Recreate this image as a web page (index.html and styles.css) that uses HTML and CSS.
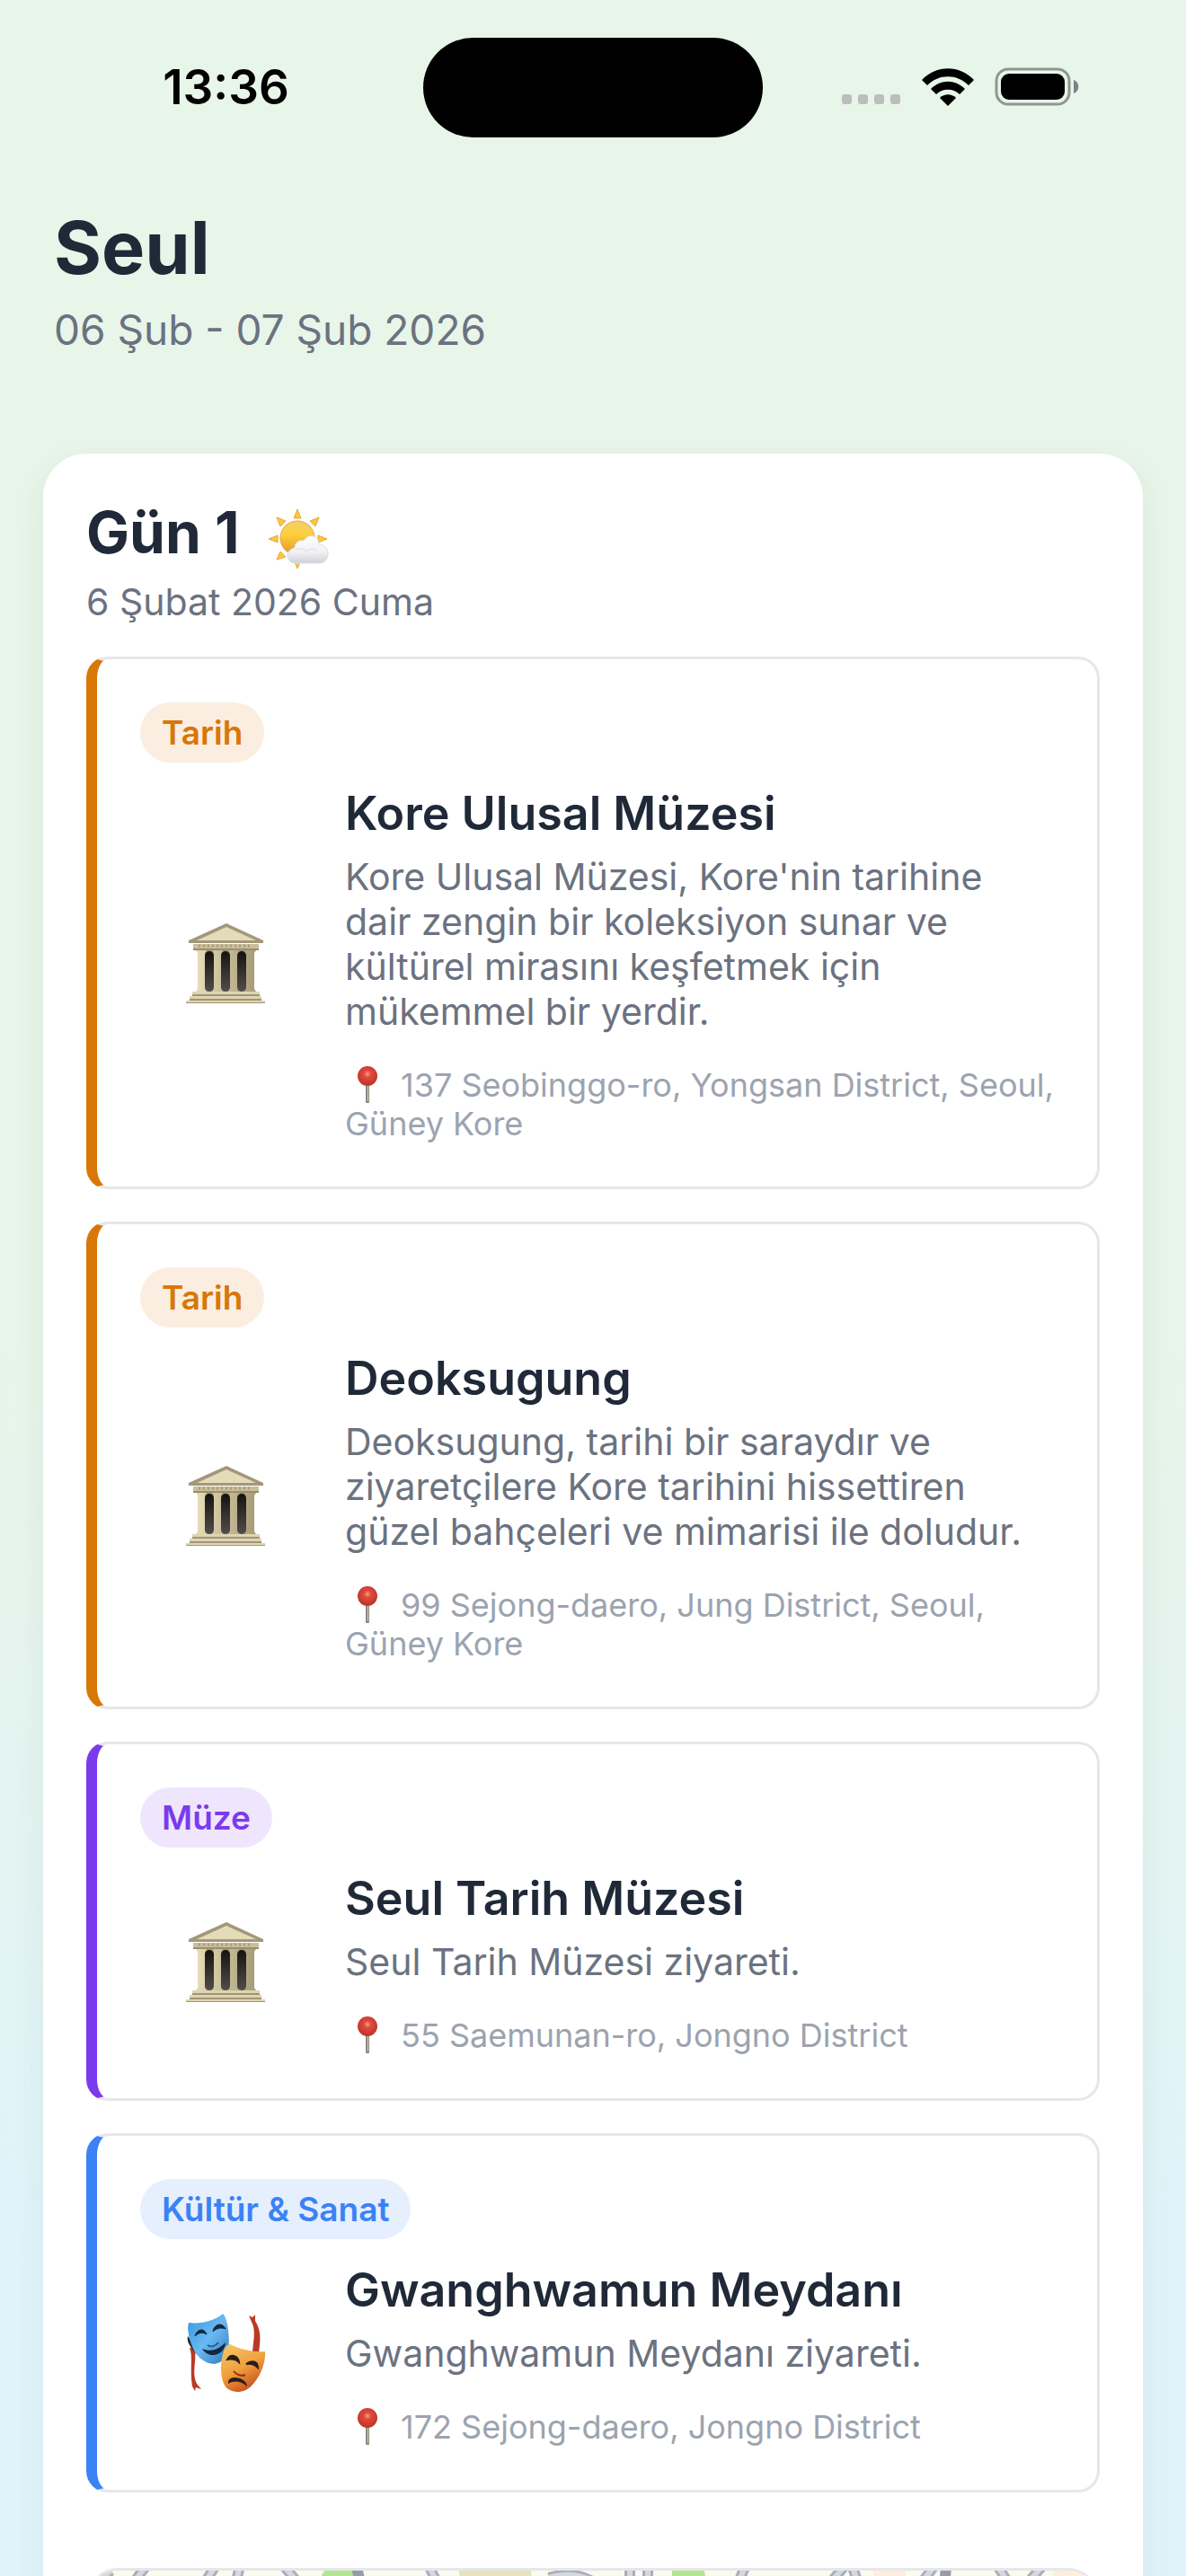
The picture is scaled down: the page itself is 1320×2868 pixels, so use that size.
FILE: index.html
```html
<!DOCTYPE html>
<html lang="tr">

<head>
  <meta charset="UTF-8">
  <meta name="viewport" content="width=device-width, initial-scale=1.0">
  <title>Seul - Gezi Planı</title>
  <link rel="stylesheet" href="styles.css">
</head>

<body>
  <!-- Shared drawings -->
  <svg class="sprite" aria-hidden="true">
    <defs>
      <linearGradient id="stone" x1="0" y1="0" x2="1" y2="0">
        <stop offset="0" stop-color="#e6dcb8" />
        <stop offset="1" stop-color="#a89b78" />
      </linearGradient>
      <linearGradient id="hall" x1="0" y1="0" x2="0" y2="1">
        <stop offset="0" stop-color="#15120f" />
        <stop offset="1" stop-color="#524d4a" />
      </linearGradient>
      <radialGradient id="pinHead" cx="0.5" cy="0.4" r="0.6">
        <stop offset="0" stop-color="#f5a184" />
        <stop offset="0.3" stop-color="#e2483d" />
        <stop offset="1" stop-color="#b93527" />
      </radialGradient>
      <linearGradient id="sunFill" x1="0" y1="0" x2="0" y2="1">
        <stop offset="0" stop-color="#f3cf6d" />
        <stop offset="0.4" stop-color="#fdd03a" />
        <stop offset="1" stop-color="#e8922a" />
      </linearGradient>
      <linearGradient id="cloudFill" x1="0" y1="0" x2="0" y2="1">
        <stop offset="0" stop-color="#ffffff" />
        <stop offset="0.6" stop-color="#f1f1f4" />
        <stop offset="1" stop-color="#cfd0d8" />
      </linearGradient>
      <linearGradient id="maskBlue" x1="0" y1="0" x2="1" y2="1">
        <stop offset="0" stop-color="#3296dc" />
        <stop offset="0.5" stop-color="#6bb9f2" />
        <stop offset="1" stop-color="#2f78bd" />
      </linearGradient>
      <linearGradient id="maskGold" x1="0.2" y1="0" x2="0.7" y2="1">
        <stop offset="0" stop-color="#f6c468" />
        <stop offset="0.5" stop-color="#f0a03c" />
        <stop offset="1" stop-color="#c4471e" />
      </linearGradient>
    </defs>
    <symbol id="museum" viewBox="0 0 90 90">
      <path d="M13 30h63v46H13z" fill="#a3977a" />
      <g fill="url(#hall)">
        <rect x="21" y="31" width="10" height="45" rx="5" />
        <rect x="39" y="31" width="10" height="45" rx="5" />
        <rect x="57" y="31" width="10" height="45" rx="5" />
      </g>
      <g fill="url(#stone)">
        <path d="M13 31h8v45h-8zM31 31h8v45h-8zM49 31h8v45h-8zM67 31h9v45h-9z" />
        <path d="M11 30h12l-2 3h-8zM30 30h11l-2 3h-8zM48 30h11l-2 3h-8zM66 30h12l-2 3h-9z" />
        <path d="M11 76l2-3h8l2 3zM29 76l2-3h8l2 3zM47 76l2-3h8l2 3zM66 76l1-3h9l2 3z" />
      </g>
      <path d="M45 0L86 19v3H3v-3z" fill="#a3977a" />
      <path d="M45 4L78 19H12z" fill="#e4dbb9" />
      <path d="M8 23h73v7H8z" fill="#c9be9b" />
      <path d="M8 28h73v2H8z" fill="#9a8e6b" />
      <path d="M14 25h60" stroke="#a99d7b" stroke-width="3" stroke-dasharray="2 3" />
      <path d="M7 76h75v4H7zM4 81h80v4H4zM0 86h88v3H0z" fill="#ded5b2" />
      <path d="M7 79h75v2H7zM4 84h80v2H4zM0 88h88v1H0z" fill="#a19575" />
    </symbol>
    <symbol id="masks" viewBox="0 0 90 90">
      <path d="M4 38c4 9 0 24 3 43l3 5 1-4 6 2-5-6c-6-12 0-25-2-40z" fill="#b93a24" />
      <path d="M2 25c-2 6 4 14 10 20l-2-10z" fill="#25292d" />
      <path d="M70 2l3 7c5 10 2 20 1 34h7c2-14 3-24-4-35V1l-3 3z" fill="#b93a24" />
      <path d="M3 10C17 12 33 7 41 0c6 5 8 30 6 40-2 9-6 14-15 16-11 0-22-9-26-22C3 26 1 16 3 10z" fill="url(#maskBlue)" />
      <path d="M10 25c2-8 10-10 13-2-5-3-9-2-13 2zM30 20c1-9 11-11 14-3-5-2-10-1-14 3z" fill="#142940" stroke="#142940" />
      <path d="M24 35c4 3 9 1 12-3" fill="none" stroke="#1e5d96" stroke-width="2" />
      <path d="M18 39c10 4 18 1 26-7-1 15-19 19-26 7z" fill="#12263d" />
      <path d="M49 34c12 6 27 9 39 8 1 12-5 28-15 38-7 8-18 9-26 4-9-6-10-28-5-42 1-4 3-7 7-8z" fill="url(#maskGold)" />
      <path d="M46 51c3-7 12-5 13 3-4-4-8-4-13-3zM67 56c6-5 13-3 13 4-4-4-8-5-13-4z" fill="#2b1d18" stroke="#2b1d18" stroke-width="2" />
      <path d="M53 64c3 4 9 6 13 4" fill="none" stroke="#7f3918" stroke-width="2" />
      <path d="M47 78c-1-12 21-7 21 3-7-6-14-7-21-3z" fill="#2b1d18" />
    </symbol>
    <symbol id="pin" viewBox="0 0 22 42">
      <rect x="9" y="18" width="4" height="23" rx="1" fill="#8b8880" />
      <rect x="11" y="20" width="1" height="19" fill="#d9cdb4" />
      <circle cx="11" cy="11" r="11" fill="url(#pinHead)" />
    </symbol>
  </svg>

  <div class="screen">
    <div class="status-bar">
      <div class="time">13:36</div>
      <div class="island"></div>
      <div class="status-icons">
        <svg class="signal" viewBox="0 0 66 12" aria-hidden="true">
          <g fill="#bcbebd">
            <rect width="11" height="11" rx="3" />
            <rect x="18" width="11" height="11" rx="3" />
            <rect x="36" width="11" height="11" rx="3" />
            <rect x="54" width="11" height="11" rx="3" />
          </g>
        </svg>
        <svg class="wifi" viewBox="0 0 58 42" aria-hidden="true">
          <path d="M0 13C16-4 42-4 58 13L52 19C39 6 19 6 6 19z" />
          <path d="M10 23C21 12 37 12 48 23L42 29C35 22 23 22 16 29z" />
          <path d="M20 33C25 28 33 28 38 33L29 42z" />
        </svg>
        <svg class="battery" viewBox="0 0 94 44" aria-hidden="true">
          <rect x="2" y="2" width="81" height="39" rx="13" fill="none" stroke="#8f9690" stroke-width="3" />
          <rect x="7" y="7" width="71" height="29" rx="9" />
          <path d="M88 14c7 2 7 13 0 15z" fill="#7b828a" />
        </svg>
      </div>
    </div>

    <header class="trip-header">
      <h1>Seul</h1>
      <p class="trip-dates">06 Şub - 07 Şub 2026</p>
    </header>

    <main class="day-card">
      <div class="day-title">
        <h2>Gün 1</h2>
        <svg class="weather" viewBox="0 0 68 68" role="img" aria-label="Parçalı bulutlu">
          <g fill="#f9c938" stroke="#eaa43a" stroke-width="1">
            <path d="M33 1l4 10h-8zM10 10l10 4-6 6zM57 10l-4 10-6-6zM1 34l10-4v8zM66 34l-10-4v8zM10 57l4-9 6 6zM33 67l-4-10h8z" />
          </g>
          <circle cx="33" cy="33" r="19" fill="url(#sunFill)" stroke="#e6a23a" />
          <path d="M31 61c-12 0-12-15-1-17 0-7 6-9 10-8 5-9 17-6 17 4 14 1 13 21 0 21z" fill="url(#cloudFill)" stroke="#dedfe5" />
          <path d="M32 46c6-3 10 0 11 3 2-4 8-5 12-2" fill="none" stroke="#dcdde4" />
        </svg>
      </div>
      <p class="day-date">6 Şubat 2026 Cuma</p>

      <div class="places">
        <article class="place history">
          <span class="badge">Tarih</span>
          <div class="place-body">
            <div class="place-icon"><svg><use href="#museum" /></svg></div>
            <div class="place-info">
              <h3>Kore Ulusal Müzesi</h3>
              <p class="description">Kore Ulusal Müzesi, Kore'nin tarihine dair zengin bir koleksiyon sunar ve kültürel mirasını keşfetmek için mükemmel bir yerdir.</p>
              <p class="address"><svg class="pin"><use href="#pin" /></svg>137 Seobinggo-ro, Yongsan District, Seoul, Güney Kore</p>
            </div>
          </div>
        </article>

        <article class="place history">
          <span class="badge">Tarih</span>
          <div class="place-body">
            <div class="place-icon"><svg><use href="#museum" /></svg></div>
            <div class="place-info">
              <h3>Deoksugung</h3>
              <p class="description">Deoksugung, tarihi bir saraydır ve ziyaretçilere Kore tarihini hissettiren güzel bahçeleri ve mimarisi ile doludur.</p>
              <p class="address"><svg class="pin"><use href="#pin" /></svg>99 Sejong-daero, Jung District, Seoul, Güney Kore</p>
            </div>
          </div>
        </article>

        <article class="place museum">
          <span class="badge">Müze</span>
          <div class="place-body">
            <div class="place-icon"><svg><use href="#museum" /></svg></div>
            <div class="place-info">
              <h3>Seul Tarih Müzesi</h3>
              <p class="description">Seul Tarih Müzesi ziyareti.</p>
              <p class="address"><svg class="pin"><use href="#pin" /></svg>55 Saemunan-ro, Jongno District</p>
            </div>
          </div>
        </article>

        <article class="place culture">
          <span class="badge">Kültür &amp; Sanat</span>
          <div class="place-body">
            <div class="place-icon"><svg><use href="#masks" /></svg></div>
            <div class="place-info">
              <h3>Gwanghwamun Meydanı</h3>
              <p class="description">Gwanghwamun Meydanı ziyareti.</p>
              <p class="address"><svg class="pin"><use href="#pin" /></svg>172 Sejong-daero, Jongno District</p>
            </div>
          </div>
        </article>
      </div>

      <div class="map">
        <svg viewBox="0 0 1122 600" preserveAspectRatio="xMidYMin slice" aria-hidden="true">
          <rect width="1122" height="600" fill="#fbfaef" />
          <path d="M262 0h32l6 16-20 30-30-24z" fill="#b3e592" />
          <path d="M649 0h36l8 60h-44z" fill="#b3e592" />
          <path d="M412 0h80l10 90h-84z" fill="#e9e2bf" />
          <path d="M873 0h36v70h-36zM1074 0h48v80h-60z" fill="#fdeedd" />
          <g fill="none" stroke="#a9afb8" stroke-width="12">
            <path d="M0 22L24 0M48 16L64-6M112 40L140-4M156 50L168-6M218-4L246 30M378-6L400 40M512 8Q540 0 560 12M602-4V60M622-4V60M716 30L730-4M820 20L840-4M850-4L864 40M922 20L940-4M1012-4L1040 40M1040 20L1060-4" />
          </g>
          <g fill="none" stroke="#d5d9de" stroke-width="6">
            <path d="M0 22L24 0M48 16L64-6M112 40L140-4M156 50L168-6M218-4L246 30M378-6L400 40M512 8Q540 0 560 12M602-4V60M622-4V60M716 30L730-4M820 20L840-4M850-4L864 40M922 20L940-4M1012-4L1040 40M1040 20L1060-4" />
          </g>
          <path d="M298-4L312 60M954-4L948 60" stroke="#969da8" stroke-width="12" />
        </svg>
      </div>
    </main>
  </div>
</body>

</html>
```
FILE: styles.css
```css
* {
  margin: 0;
  padding: 0;
  box-sizing: border-box;
}

body {
  font-family: Inter, 'Liberation Sans', sans-serif;
  color: #1f2937;
}

.sprite {
  position: absolute;
  width: 0;
  height: 0;
}

.screen {
  height: 100vh;
  overflow: hidden;
  background: linear-gradient(180deg, #e8f5e9 0%, #e8f5e9 52%, #e0f3fa 88%);
}

/* Status bar */
.status-bar {
  display: grid;
  grid-template-columns: 1fr 378px 1fr;
  align-items: center;
  height: 194px;
}

.time {
  padding-left: 32px;
  text-align: center;
  color: #000;
  font-size: 53px;
  font-weight: 600;
}

.island {
  height: 111px;
  border-radius: 56px;
  background: #000;
}

.status-icons {
  display: flex;
  align-items: center;
  gap: 23px;
  padding-left: 88px;
}

.signal {
  width: 66px;
  height: 12px;
  margin-top: 28px;
}

.wifi {
  width: 58px;
  height: 42px;
}

.battery {
  width: 94px;
  height: 44px;
}

/* Trip header */
.trip-header {
  padding: 32px 60px 0;
}

h1 {
  font-size: 81px;
  line-height: 100px;
  font-weight: 700;
}

.trip-dates {
  margin-top: 12px;
  color: #6b7280;
  font-size: 46px;
  line-height: 58px;
}

/* Day card */
.day-card {
  margin: 109px 48px 0;
  padding: 48px;
  background: #fff;
  border-radius: 48px;
  box-shadow: 0 12px 36px rgba(40, 100, 40, 0.07);
}

.day-title {
  display: flex;
  align-items: center;
  gap: 32px;
  height: 80px;
}

h2 {
  font-size: 64px;
  line-height: 80px;
  font-weight: 700;
}

.weather {
  width: 68px;
  height: 68px;
  margin-top: 14px;
}

.day-date {
  margin-top: 12px;
  color: #6b7280;
  font-size: 41px;
  line-height: 50px;
}

.places {
  display: flex;
  flex-direction: column;
  gap: 36px;
  margin-top: 36px;
}

.place {
  padding: 48px;
  border: 3px solid #e5e7eb;
  border-left-width: 12px;
  border-radius: 24px;
}

.badge {
  display: block;
  width: fit-content;
  padding: 12px 24px;
  border-radius: 36px;
  font-size: 37px;
  line-height: 43px;
  font-weight: 600;
}

.history {
  border-left-color: #d97706;
}

.history .badge {
  background: #fbeee0;
  color: #d97706;
}

.museum {
  border-left-color: #7c3aed;
}

.museum .badge {
  background: #efe6fd;
  color: #7c3aed;
}

.culture {
  border-left-color: #3b82f6;
}

.culture .badge {
  background: #e6effe;
  color: #3b82f6;
}

.place-body {
  display: flex;
  align-items: center;
  gap: 36px;
  margin-top: 24px;
}

.place-icon {
  display: flex;
  flex: none;
  justify-content: center;
  width: 192px;
}

.place-icon svg {
  width: 90px;
  height: 90px;
}

.place-info {
  flex: 1;
}

h3 {
  font-size: 52px;
  line-height: 66px;
  font-weight: 600;
}

.description {
  margin-top: 12px;
  color: #6b7280;
  font-size: 41px;
  line-height: 50px;
}

.address {
  margin-top: 36px;
  color: #9ca3af;
  font-size: 36px;
  line-height: 43px;
}

.pin {
  width: 22px;
  height: 42px;
  margin: -8px 26px -8px 14px;
  vertical-align: baseline;
}

/* Route map */
.map {
  height: 600px;
  margin-top: 84px;
  overflow: hidden;
  border: 3px solid #e5e7eb;
  border-radius: 36px;
}

.map svg {
  display: block;
  width: 100%;
  height: 100%;
}
```
